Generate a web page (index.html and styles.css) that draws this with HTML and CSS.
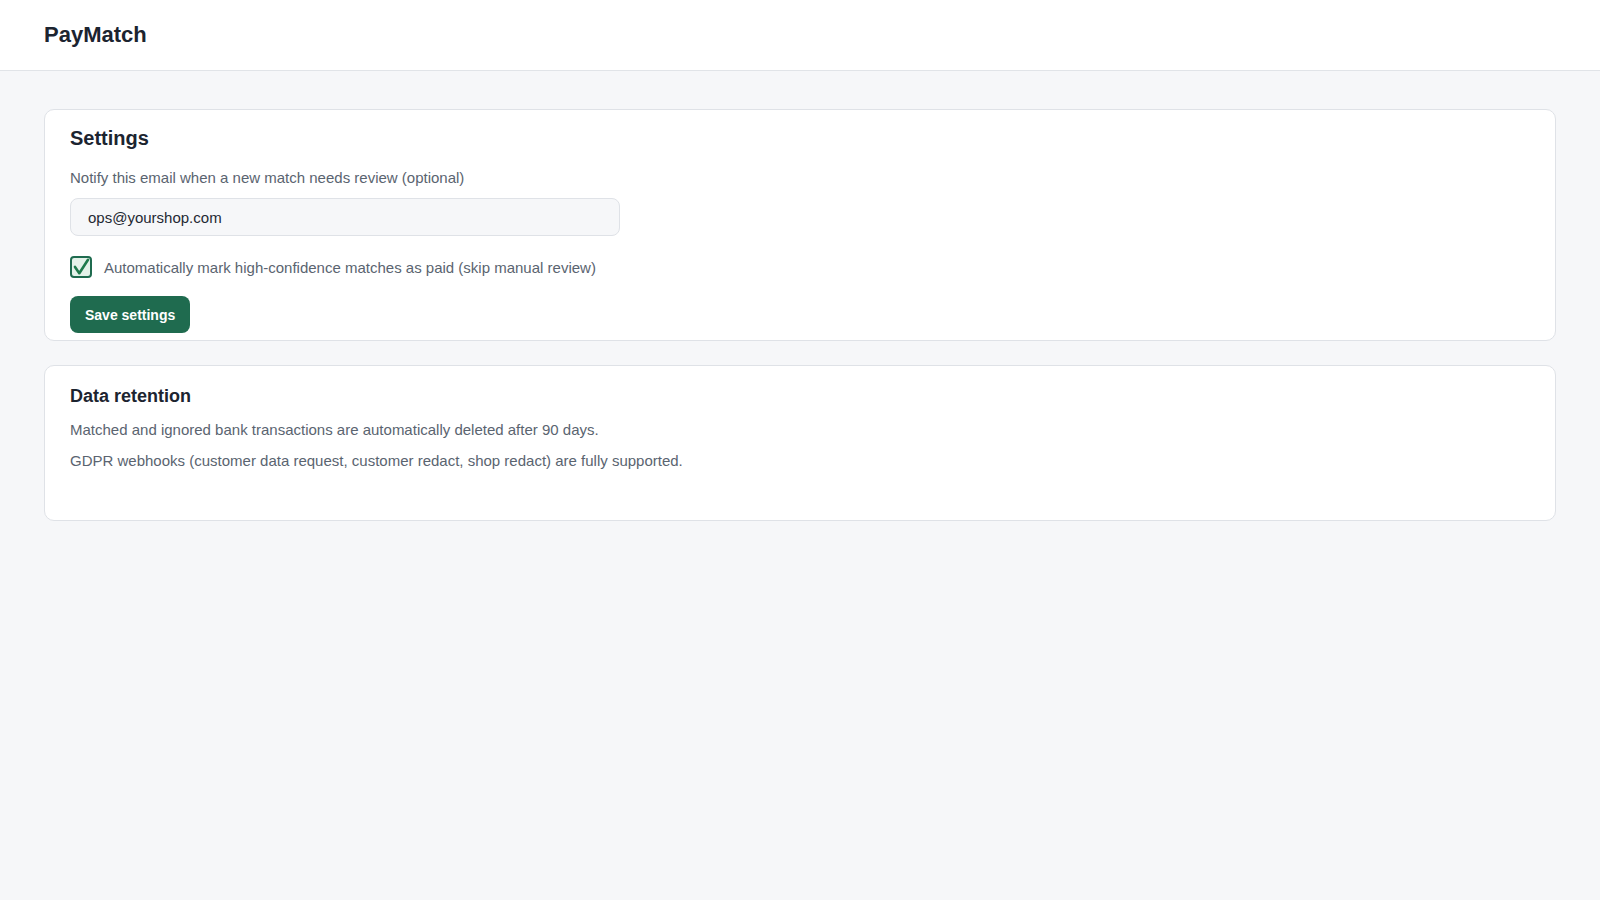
FILE: index.html
```html
<!DOCTYPE html>
<html lang="en">
<head>
  <meta charset="UTF-8" />
  <meta name="viewport" content="width=device-width, initial-scale=1" />
  <title>PayMatch - Settings</title>
  <link rel="stylesheet" href="styles.css">
</head>
<body>

  <!-- TOP BAR -->
  <header class="topbar">
    <span class="brand">PayMatch</span>
  </header>

  <main class="page">

    <!-- SETTINGS -->
    <section class="card card-settings" aria-label="Settings">
      <h2 class="card-title">Settings</h2>

      <label class="field-label" for="notifyEmail">Notify this email when a new match needs review (optional)</label>
      <input type="email" id="notifyEmail" class="text-input" value="ops@yourshop.com" />

      <label class="check-row">
        <input type="checkbox" id="autoMark" class="check-native" checked />
        <span class="check-box" aria-hidden="true">
          <svg viewBox="0 0 18 18" width="18" height="18">
            <path d="M3 8.9 L7.3 15.2 L16 1.8" fill="none" stroke="#1f7a4c" stroke-width="2.6" stroke-linecap="round" stroke-linejoin="round" />
          </svg>
        </span>
        <span class="check-text">Automatically mark high-confidence matches as paid (skip manual review)</span>
      </label>

      <button id="saveBtn" class="btn-primary">Save settings</button>
    </section>

    <!-- DATA RETENTION -->
    <section class="card card-info" aria-label="Data retention">
      <h2 class="card-title card-title-sm">Data retention</h2>
      <p class="card-text">Matched and ignored bank transactions are automatically deleted after 90 days.</p>
      <p class="card-text">GDPR webhooks (customer data request, customer redact, shop redact) are fully supported.</p>
    </section>

  </main>

</body>
</html>
```

FILE: styles.css
```css
* {
  box-sizing: border-box;
}

html, body {
  margin: 0;
  height: 100%;
}

body {
  font-family: "Liberation Sans", Arial, sans-serif;
  background: #f6f7f9;
  color: #1f2933;
}

/* top bar */
.topbar {
  height: 71px;
  padding: 0 44px;
  display: flex;
  align-items: center;
  background: #fff;
  border-bottom: 1px solid #e1e4e8;
}

.brand {
  font-size: 22px;
  font-weight: 700;
  color: #1c2430;
}

.page {
  padding: 38px 44px;
}

/* cards */
.card {
  background: #fff;
  border: 1px solid #dfe2e7;
  border-radius: 10px;
  padding: 16px 25px 7px;
  margin-bottom: 24px;
}

.card-title {
  margin: 0 0 17px;
  font-size: 20px;
  line-height: 24px;
  font-weight: 700;
  color: #1c2430;
}

.card-title-sm {
  font-size: 18px;
  margin: 2px 0 11px;
}

.field-label {
  display: block;
  margin-bottom: 9px;
  font-size: 15px;
  line-height: 22px;
  color: #5a6470;
}

.text-input {
  display: block;
  width: 550px;
  height: 38px;
  padding: 0 17px;
  border: 1px solid #dfe2e7;
  border-radius: 8px;
  background: #f6f7f9;
  font-family: inherit;
  font-size: 15px;
  color: #1f2933;
  outline: none;
}

.text-input:focus {
  border-color: #1f6b4f;
}

/* checkbox row */
.check-row {
  display: flex;
  align-items: center;
  gap: 12px;
  margin-top: 20px;
  height: 22px;
  cursor: pointer;
}

.check-native {
  position: absolute;
  opacity: 0;
  pointer-events: none;
}

.check-box {
  width: 22px;
  height: 22px;
  flex: none;
  display: flex;
  align-items: center;
  justify-content: center;
  border: 2px solid #1f6b4f;
  border-radius: 4px;
  background: #e4f2e9;
}

.check-box svg {
  overflow: visible;
}

.check-native:not(:checked) + .check-box svg {
  visibility: hidden;
}

.check-native:not(:checked) + .check-box {
  background: #fff;
}

.check-text {
  font-size: 15px;
  color: #5a6470;
}

.btn-primary {
  display: block;
  margin-top: 18px;
  height: 37px;
  padding: 0 15px;
  border: none;
  border-radius: 8px;
  background: #1f6b4f;
  color: #fff;
  font-family: inherit;
  font-size: 14px;
  font-weight: 700;
  cursor: pointer;
}

.btn-primary:hover {
  background: #185a42;
}

.card-info {
  padding-bottom: 48px;
}

.card-text {
  margin: 0 0 8px;
  font-size: 15px;
  line-height: 22.5px;
  color: #5a6470;
}

.card-text:last-child {
  margin-bottom: 0;
}
```
